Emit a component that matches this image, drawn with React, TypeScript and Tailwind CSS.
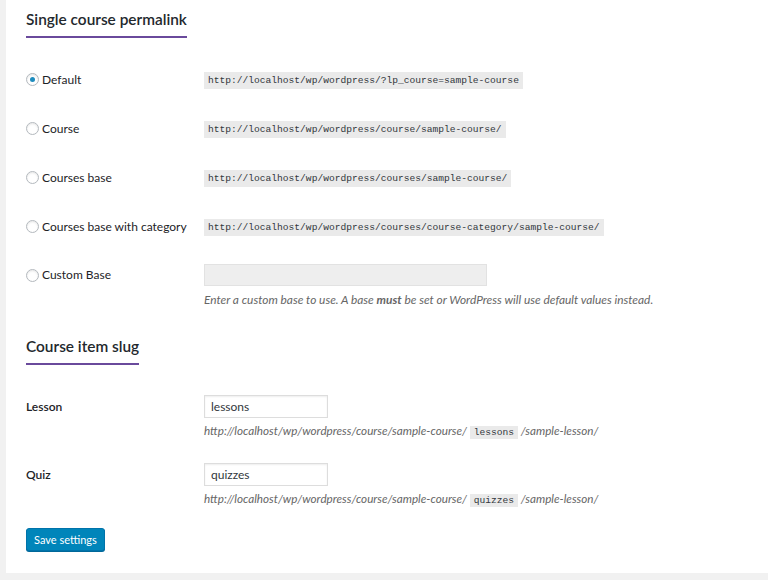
const sans = "font-['Lato','Open_Sans',sans-serif]";
const mono = "font-['Liberation_Mono','DejaVu_Sans_Mono',monospace]";

const options = [
  { label: "Default", url: "http://localhost/wp/wordpress/?lp_course=sample-course", checked: true },
  { label: "Course", url: "http://localhost/wp/wordpress/course/sample-course/" },
  { label: "Courses base", url: "http://localhost/wp/wordpress/courses/sample-course/" },
  { label: "Courses base with category", url: "http://localhost/wp/wordpress/courses/course-category/sample-course/" },
];

function Radio({ checked }: { checked?: boolean }) {
  return (
    <span className="w-[13px] h-[13px] rounded-full border border-[#b4b9be] bg-white flex items-center justify-center shadow-[inset_0_1px_2px_rgba(0,0,0,0.1)] shrink-0">
      {checked && <span className="w-[5px] h-[5px] rounded-full bg-[#1e8cbe]" />}
    </span>
  );
}

function Heading({ children }: { children: string }) {
  return (
    <div className="inline-block border-b-2 border-[#6a4a9c] pb-[7px] text-[15.4px] leading-[20px] font-semibold text-[#23282d]">
      {children}
    </div>
  );
}

function SlugRow({ label, value, className }: { label: string; value: string; className: string }) {
  return (
    <div className={`grid grid-cols-[178px_1fr] ${className}`}>
      <div className="h-[23px] flex items-center font-semibold">{label}</div>
      <div>
        <input
          readOnly
          value={value}
          className="block w-[124px] h-[23px] border border-[#ddd] px-[6px] text-[12px] text-[#32373c] shadow-[inset_0_1px_2px_rgba(0,0,0,0.07)] outline-none"
        />
        <p className="mt-[4px] text-[11.7px] leading-[16px] italic text-[#666]">
          http://localhost/wp/wordpress/course/sample-course/{" "}
          <code className={`not-italic bg-[#eaeaea] px-[4px] py-[1px] text-[9.6px] text-[#32373c] ${mono}`}>{value}</code>{" "}
          /sample-lesson/
        </p>
      </div>
    </div>
  );
}

export default function App() {
  return (
    <div className={`min-h-[580px] bg-[#f1f1f1] pl-[6px] ${sans}`}>
      <div className="bg-white pl-[20px] pt-[9px] pb-[22px] text-[12px] text-[#1d2327]">
        {/* Single course permalink */}
        <Heading>Single course permalink</Heading>

        <div className="mt-[17px]">
          {options.map((o) => (
            <div key={o.label} className="grid grid-cols-[178px_1fr] h-[49px] items-center">
              <label className="flex items-center gap-[3px] whitespace-nowrap">
                <Radio checked={o.checked} />
                <span>{o.label}</span>
              </label>
              <div>
                <code className={`inline-block bg-[#eaeaea] px-[4px] h-[17px] leading-[17px] text-[9.6px] text-[#32373c] ${mono}`}>
                  {o.url}
                </code>
              </div>
            </div>
          ))}

          <div className="grid grid-cols-[178px_1fr] pt-[13px]">
            <label className="flex items-center gap-[3px] h-[22px] self-start">
              <Radio />
              <span>Custom Base</span>
            </label>
            <div>
              <div className="w-[283px] h-[22px] bg-[#eeeeee] border border-[#e2e2e2]" />
              <p className="mt-[6px] text-[11.9px] leading-[16px] italic text-[#666]">
                Enter a custom base to use. A base <b className="font-bold">must</b> be set or WordPress will use default values instead.
              </p>
            </div>
          </div>
        </div>

        {/* Course item slug */}
        <div className="mt-[28px]">
          <Heading>Course item slug</Heading>
        </div>

        <SlugRow label="Lesson" value="lessons" className="mt-[30px]" />
        <SlugRow label="Quiz" value="quizzes" className="mt-[22px]" />

        <button className="mt-[19px] h-[23px] px-[7px] rounded-[3px] bg-[#0085ba] border border-[#0073aa] text-white text-[11px] leading-[21px] shadow-[0_1px_0_#006799]">
          Save settings
        </button>
      </div>
    </div>
  );
}
